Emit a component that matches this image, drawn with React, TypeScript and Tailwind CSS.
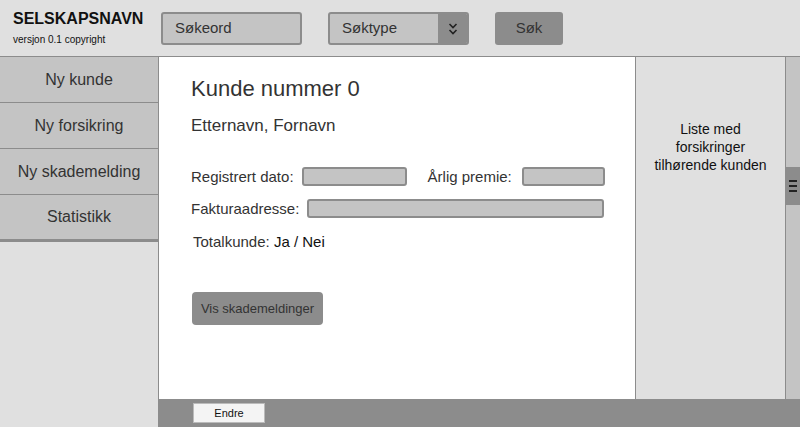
import React from 'react';

const menu = ['Ny kunde', 'Ny forsikring', 'Ny skademelding', 'Statistikk'];

function Field({ className }: { className: string }) {
  return <div className={`h-[19px] rounded-[3px] border-2 border-[#8c8c8c] bg-[#c4c4c4] ${className}`} />;
}

export default function App() {
  return (
    <div
      className="flex h-screen w-full flex-col overflow-hidden bg-[#e0e0e0] text-[#333]"
      style={{ fontFamily: '"Liberation Sans", Arial, sans-serif' }}
    >
      <header className="flex h-[57px] shrink-0 items-start border-b border-[#8c8c8c] bg-[#e0e0e0]">
        <div className="w-[161px] pl-[13px] pt-[9px]">
          <div className="text-[16px] font-bold leading-[20px] text-[#111]">SELSKAPSNAVN</div>
          <div className="mt-[5px] text-[10px] leading-[12px] text-[#111]">versjon 0.1 copyright</div>
        </div>
        <div className="mt-[12px] flex h-[33px] w-[141px] items-center rounded-[3px] border-2 border-[#8c8c8c] bg-[#c4c4c4] pl-[12px] text-[15px]">
          Søkeord
        </div>
        <div className="ml-[26px] mt-[12px] flex h-[33px] w-[141px] overflow-hidden rounded-[3px] border-2 border-[#8c8c8c] bg-[#c4c4c4]">
          <div className="flex flex-1 items-center pl-[12px] text-[15px]">Søktype</div>
          <div className="flex w-[29px] items-center justify-center bg-[#8c8c8c]">
            <svg width="10" height="14" viewBox="0 0 10 14" fill="none" stroke="#222" strokeWidth="1.6">
              <path d="M1.5 2 L5 5.5 L8.5 2" />
              <path d="M1.5 8 L5 11.5 L8.5 8" />
            </svg>
          </div>
        </div>
        <div className="ml-[26px] mt-[12px] flex h-[33px] w-[68px] items-center justify-center rounded-[3px] bg-[#8c8c8c] text-[15px]">
          Søk
        </div>
      </header>

      <div className="flex min-h-0 flex-1">
        <nav className="w-[159px] shrink-0 border-r border-[#8c8c8c] bg-[#e0e0e0]">
          {menu.map((m, i) => (
            <div
              key={m}
              className={`flex items-center justify-center border-[#8c8c8c] bg-[#c4c4c4] text-[16px] ${
                i === menu.length - 1 ? 'h-[47px] border-b-[3px]' : 'h-[46px] border-b'
              }`}
            >
              {m}
            </div>
          ))}
        </nav>

        <div className="flex min-w-0 flex-1 flex-col">
          <div className="flex min-h-0 flex-1">
            <main className="flex-1 bg-white pl-[32px] pt-[19px]">
              <h1 className="text-[22px] leading-[26px]">Kunde nummer 0</h1>
              <div className="mt-[13px] text-[17px] leading-[22px]">Etternavn, Fornavn</div>
              <div className="mt-[30px] flex items-center text-[15px] leading-[19px]">
                <span>Registrert dato:</span>
                <Field className="ml-[8px] w-[105px]" />
                <span className="ml-[21px]">Årlig premie:</span>
                <Field className="ml-[10px] w-[83px]" />
              </div>
              <div className="mt-[13px] flex items-center text-[15px] leading-[19px]">
                <span>Fakturaadresse:</span>
                <Field className="ml-[8px] w-[297px]" />
              </div>
              <div className="ml-[2px] mt-[14px] text-[15px] leading-[19px]">
                Totalkunde: <span className="text-[#111]">Ja / Nei</span>
              </div>
              <div className="ml-[1px] mt-[41px] flex h-[33px] w-[131px] items-center justify-center rounded-[4px] bg-[#8c8c8c] text-[13px]">
                Vis skademeldinger
              </div>
            </main>

            <aside className="flex w-[150px] shrink-0 justify-center border-l border-[#8c8c8c] bg-[#e0e0e0] pt-[63px]">
              <p className="text-center text-[14px] leading-[18px] text-[#111]">
                Liste med
                <br />
                forsikringer
                <br />
                tilhørende kunden
              </p>
            </aside>

            <div className="flex w-[15px] shrink-0 flex-col border-l border-[#8c8c8c] bg-[#c4c4c4]">
              <div className="h-[110px]" />
              <div className="flex h-[38px] flex-col items-center justify-center gap-[3px] bg-[#8c8c8c]">
                <span className="h-[2px] w-[8px] bg-[#222]" />
                <span className="h-[2px] w-[8px] bg-[#222]" />
                <span className="h-[2px] w-[8px] bg-[#222]" />
              </div>
            </div>
          </div>

          <footer className="flex h-[28px] shrink-0 items-center bg-[#8c8c8c] pl-[34px]">
            <div className="flex h-[20px] w-[72px] items-center justify-center border border-[#bbb] bg-[#f4f4f4] text-[11px] text-[#111]">
              Endre
            </div>
          </footer>
        </div>
      </div>
    </div>
  );
}
